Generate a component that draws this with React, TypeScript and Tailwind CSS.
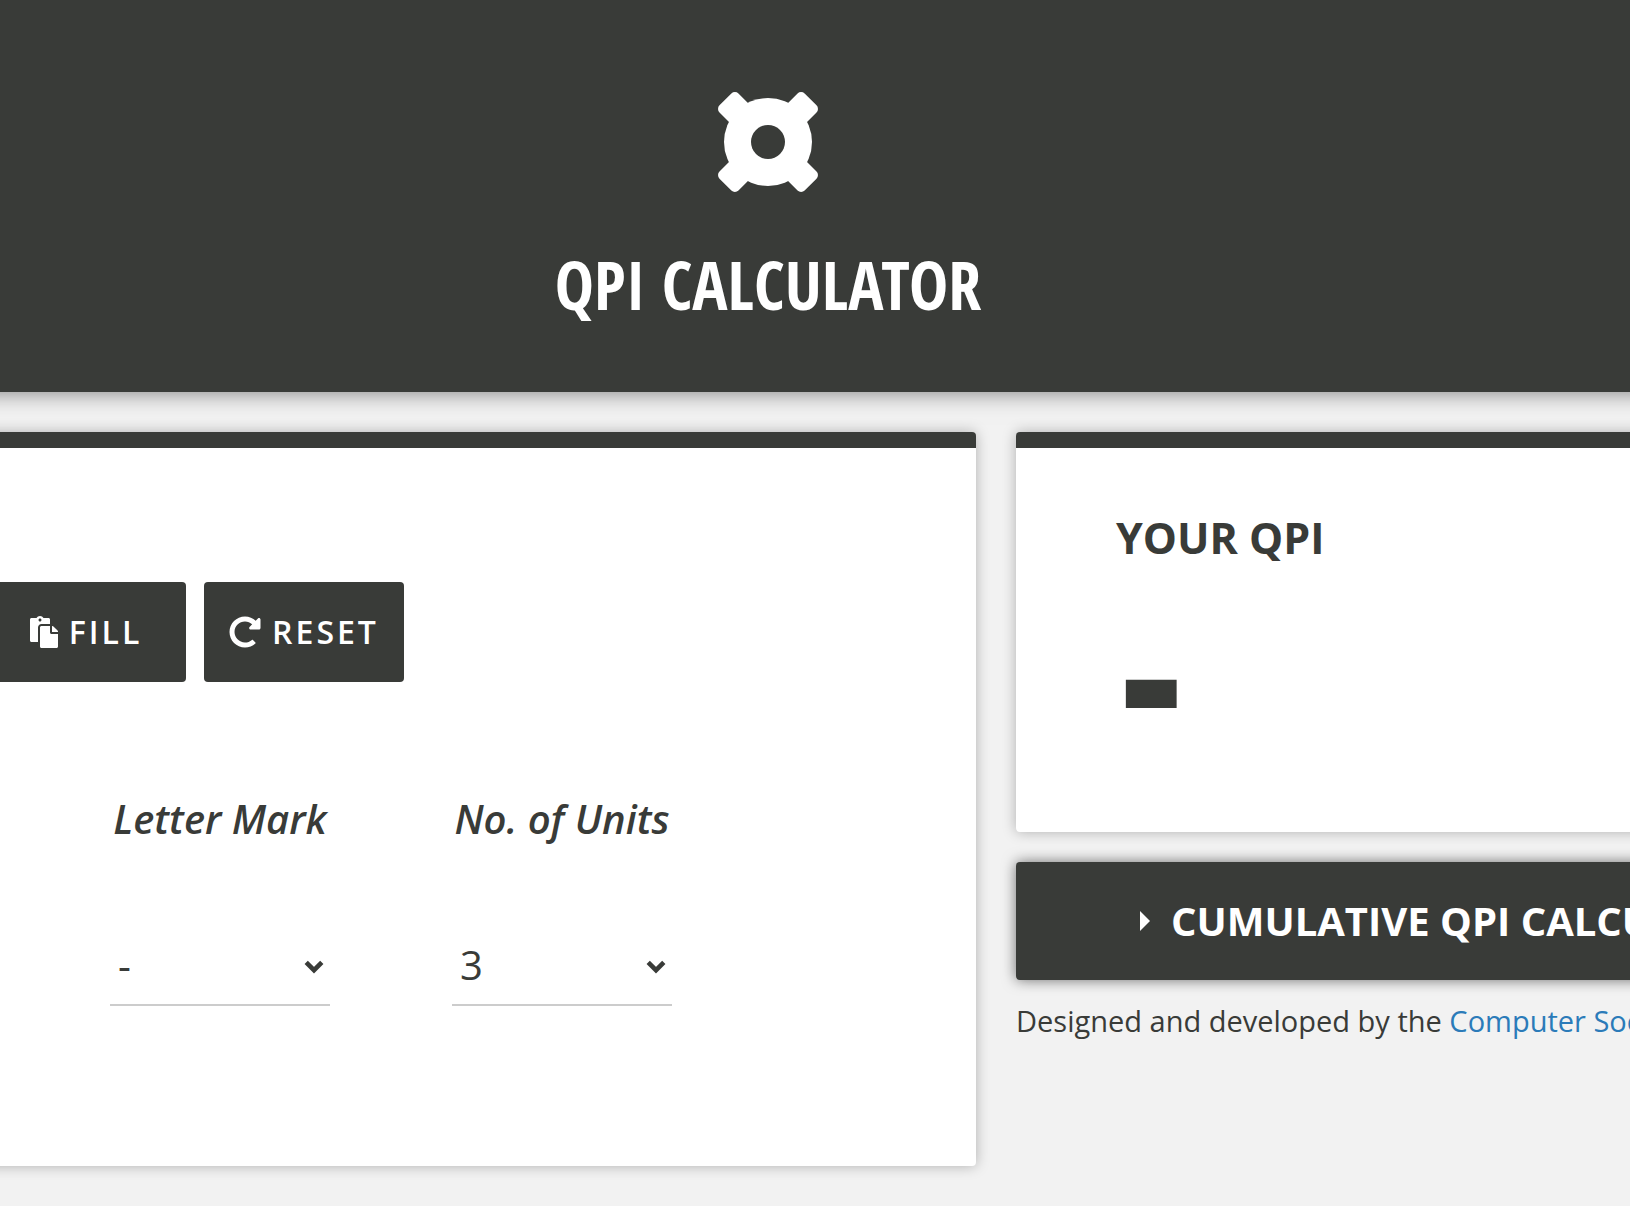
import { useState } from "react";
import { FaPaste, FaRedoAlt } from "react-icons/fa";

const MARKS = ["-", "A", "B+", "B", "C+", "C", "D", "F"];
const UNITS = ["1", "2", "3", "4", "5", "6"];

function Logo() {
  return (
    <svg viewBox="-50 -50 100 100" className="size-[100px]" aria-hidden="true">
      <mask id="hub">
        <rect x="-50" y="-50" width="100" height="100" fill="white" />
        <circle r="17" fill="black" />
      </mask>
      <g fill="white" mask="url(#hub)">
        <circle r="44" />
        <rect x="-60.2" y="-13.4" width="120.4" height="26.8" rx="5" transform="rotate(45)" />
        <rect x="-60.2" y="-13.4" width="120.4" height="26.8" rx="5" transform="rotate(-45)" />
      </g>
    </svg>
  );
}

function Select({
  labelledBy,
  options,
  value,
  onChange,
}: {
  labelledBy: string;
  options: string[];
  value: string;
  onChange: (value: string) => void;
}) {
  return (
    <div className="relative">
      <select
        aria-labelledby={labelledBy}
        value={value}
        onChange={(e) => onChange(e.target.value)}
        className="block h-20 w-full appearance-none border-b-2 border-[#cccccc] bg-transparent px-2 text-[40px] outline-none"
      >
        {options.map((o) => (
          <option key={o}>{o}</option>
        ))}
      </select>
      <svg
        viewBox="0 0 20 14"
        className="pointer-events-none absolute right-1.5 bottom-8 h-3.5 w-5"
        fill="none"
        stroke="currentColor"
        strokeWidth="4.6"
        aria-hidden="true"
      >
        <path d="M2.2 2.4 10 10.2 17.8 2.4" />
      </svg>
    </div>
  );
}

export default function App() {
  const [mark, setMark] = useState("-");
  const [units, setUnits] = useState("3");
  const reset = () => {
    setMark("-");
    setUnits("3");
  };

  return (
    <div className="min-h-screen overflow-x-hidden bg-[#f2f2f2] font-['Open_Sans',sans-serif] text-[#393b38]">
      <header className="-mx-6 flex flex-col items-center bg-[#393b38] pt-[92px] pr-[94px] pb-[60px] text-white shadow-[0_0_22px_rgba(0,0,0,0.5)]">
        <Logo />
        <h1 className="mt-11 text-[66px] leading-[96px] font-bold whitespace-nowrap font-['Open_Sans_Condensed','Open_Sans',sans-serif]">
          QPI CALCULATOR
        </h1>
      </header>

      <main className="grid grid-cols-[976fr_614fr] items-start gap-10 py-10">
        <section className="-ml-6 rounded border-t-16 border-[#393b38] bg-white pt-[134px] pb-40 pl-6 shadow-[0_0_14px_rgba(0,0,0,0.28)]">
          <div className="flex gap-[18px]">
            <button
              type="button"
              className="-ml-3.5 flex h-[100px] w-[200px] items-center justify-center gap-[11px] rounded bg-[#393b38] text-[32px] font-semibold tracking-[3px] text-white"
            >
              <FaPaste className="h-8 w-7" />
              FILL
            </button>
            <button
              type="button"
              onClick={reset}
              className="flex h-[100px] w-[200px] items-center justify-center gap-[11px] rounded bg-[#393b38] text-[32px] font-semibold tracking-[3px] text-white"
            >
              <FaRedoAlt className="size-8" />
              RESET
            </button>
          </div>

          <table className="mt-[107px] ml-[49px] table-fixed text-[40px]">
            <thead>
              <tr className="italic">
                <th id="mark" scope="col" className="w-[342px] pb-[77px] font-semibold leading-[60px] whitespace-nowrap">
                  Letter Mark
                </th>
                <th id="units" scope="col" className="w-[342px] pb-[77px] font-semibold leading-[60px] whitespace-nowrap">
                  No. of Units
                </th>
              </tr>
            </thead>
            <tbody>
              <tr>
                <td className="px-[61px]">
                  <Select labelledBy="mark" options={MARKS} value={mark} onChange={setMark} />
                </td>
                <td className="px-[61px]">
                  <Select labelledBy="units" options={UNITS} value={units} onChange={setUnits} />
                </td>
              </tr>
            </tbody>
          </table>
        </section>

        <aside className="-mr-6 min-w-0">
          <section className="h-[400px] rounded border-t-16 border-[#393b38] bg-white pt-[60px] pl-[100px] shadow-[0_0_14px_rgba(0,0,0,0.28)]">
            <h2 className="text-[43px] leading-[60px] font-bold">YOUR QPI</h2>
            <output className="mt-1 ml-1.5 block text-[184px] leading-[200px] font-extrabold">-</output>
          </section>
          <button
            type="button"
            aria-expanded={false}
            className="mt-[30px] flex h-[118px] w-full items-center gap-[21px] rounded bg-[#393b38] pl-[124px] text-[40px] font-bold whitespace-nowrap text-white shadow-[0_0_14px_rgba(0,0,0,0.55)]"
          >
            <svg viewBox="0 0 10 20" className="h-5 w-2.5 shrink-0" fill="currentColor" aria-hidden="true">
              <path d="M0 0 10 10 0 20z" />
            </svg>
            CUMULATIVE QPI CALCULATOR
          </button>
          <p className="mt-[19px] text-[29px] leading-[44px] whitespace-nowrap">
            Designed and developed by the{" "}
            <a href="#society" className="text-[#2b7bb9]">
              Computer Society
            </a>
          </p>
        </aside>
      </main>
    </div>
  );
}
